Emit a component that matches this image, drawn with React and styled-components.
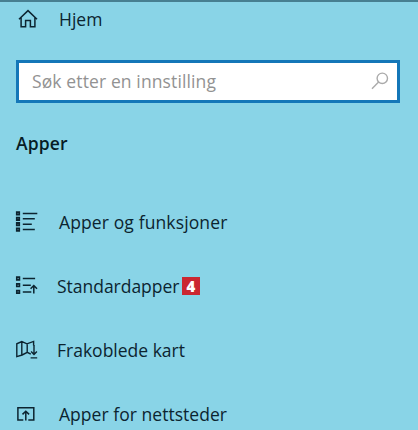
import React from "react";

//styles
import styled, { createGlobalStyle } from "styled-components";

const HomeIcon = () => (
    <svg width="20" height="20" viewBox="0 0 20 20" fill="none" stroke="currentColor" strokeWidth="1.5">
        <path d="M1 10.3L10 1.6l9 8.7M3.1 8.6v9.2h4.5v-6.2h4.8v6.2h4.5V8.6" />
    </svg>
);

const SearchIcon = () => (
    <svg width="18" height="18" viewBox="0 0 18 18" fill="none" stroke="currentColor" strokeWidth="1.4">
        <circle cx="11.3" cy="6.3" r="5.2" />
        <path d="M7.6 10L1 16.8" />
    </svg>
);

const AppsIcon = () => (
    <svg width="24" height="22" viewBox="0 0 24 22" fill="none" stroke="currentColor">
        <path
            strokeWidth="1.8"
            d="M1.8 1.2h2.4v2.4H1.8zM1.8 6.6h2.4v2.4H1.8zM1.8 12h2.4v2.4H1.8zM1.8 17.4h2.4v2.4H1.8z"
        />
        <path strokeWidth="1.5" d="M7.8 2.5h14.5M7.8 7.8h12M7.8 13.2h9M7.8 18.6h12" />
    </svg>
);

const DefaultAppsIcon = () => (
    <svg width="24" height="20" viewBox="0 0 24 20" fill="none" stroke="currentColor">
        <path strokeWidth="1.7" d="M1.8 1.2h2.6v2.6H1.8zM1.8 7.9h2.6v2.6H1.8zM1.8 14.6h2.6v2.6H1.8z" />
        <path strokeWidth="1.5" d="M7.8 2.6h12.3M7.8 9.3h8M7.8 16h8.5M18.8 17.6v-8M15.6 12.8l3.2-3.3 3.2 3.3" />
    </svg>
);

const MapIcon = () => (
    <svg width="24" height="20" viewBox="0 0 24 20" fill="none" stroke="currentColor" strokeWidth="1.4">
        <path d="M15.8 14.2l-3.5-1.8-5.2 2.6-5.3 1.6V3.8l5-2.2L12 3.8l6.6-2.4v4M6.8 1.6V15M12.2 3.8v8.6" />
        <path d="M19 5v9.4M16.1 11.6l2.9 2.9 2.9-2.9M15.6 17.9h6.6" />
    </svg>
);

const WebsitesIcon = () => (
    <svg width="21" height="16" viewBox="0 0 21 16" fill="none" stroke="currentColor" strokeWidth="1.5">
        <path d="M8.3 14H2.9V1.7h15.9V14h-5.5M10.8 14.6V5.4M7.5 8.4l3.3-3.2 3.3 3.2" />
    </svg>
);

const items = [
    { name: "Apper og funksjoner", icon: <AppsIcon />, indent: 59, spacing: 0.12 },
    { name: "Standardapper", icon: <DefaultAppsIcon />, indent: 57, spacing: -0.02, badge: 4 },
    { name: "Frakoblede kart", icon: <MapIcon />, indent: 57, spacing: 0 },
    { name: "Apper for nettsteder", icon: <WebsitesIcon />, indent: 59, spacing: 0.04 },
];

const App = () => {
    return (
        <>
            <GlobalStyle />
            <SettingsPanel>
                <HomeLink>
                    <HomeLinkIcon>
                        <HomeIcon />
                    </HomeLinkIcon>
                    <ItemName>Hjem</ItemName>
                </HomeLink>
                <SearchBox>
                    <SearchPlaceholder>Søk etter en innstilling</SearchPlaceholder>
                    <SearchIcon />
                </SearchBox>
                <SectionHeader>Apper</SectionHeader>
                <ItemList>
                    {items.map((item) => (
                        <Item key={item.name}>
                            <ItemIcon $width={item.indent - 15}>{item.icon}</ItemIcon>
                            <ItemName $spacing={item.spacing}>{item.name}</ItemName>
                            {item.badge && <Badge>{item.badge}</Badge>}
                        </Item>
                    ))}
                </ItemList>
            </SettingsPanel>
        </>
    );
};

export default App;

const GlobalStyle = createGlobalStyle`
    * {
        box-sizing: border-box;
    }

    body {
        margin: 0;

        overflow: hidden;

        font-family: "Open Sans", "Noto Sans", sans-serif;
    }
`;

const SettingsPanel = styled.div`
    height: 430px;

    overflow: hidden;

    background-color: #89d4e7;

    border-top: 2px solid #477f91;

    color: #0c2430;
`;

const HomeLink = styled.div`
    display: flex;

    height: 34px;

    align-items: center;

    padding-left: 18px;
`;

const HomeLinkIcon = styled.div`
    display: flex;

    width: 41px;
`;

const ItemName = styled.div`
    font-size: 17.5px;

    line-height: 24px;

    white-space: nowrap;

    letter-spacing: ${(props) => props.$spacing || 0}px;
`;

const SearchBox = styled.div`
    display: flex;

    width: 384px;

    height: 43px;

    margin: 24px 0 0 16px;

    padding: 0 8px 2px 13px;

    align-items: center;

    justify-content: space-between;

    background-color: #fff;

    border: 3px solid #1477b8;

    color: #aaa;
`;

const SearchPlaceholder = styled.div`
    font-size: 17.5px;

    line-height: 24px;

    letter-spacing: 0.12px;

    color: #929292;
`;

const SectionHeader = styled.div`
    margin: 28px 0 0 16px;

    font-size: 17.5px;

    font-weight: 600;

    line-height: 24px;

    letter-spacing: 0.15px;

    color: #071c25;
`;

const ItemList = styled.div`
    margin-top: 35px;
`;

const Item = styled.div`
    display: flex;

    height: 64px;

    padding-left: 15px;

    align-items: center;
`;

const ItemIcon = styled.div`
    display: flex;

    width: ${(props) => props.$width}px;

    flex-shrink: 0;
`;

const Badge = styled.div`
    width: 18px;

    height: 18px;

    margin-left: 2.5px;

    background-color: #cb2731;

    color: #fff;

    font-size: 15px;

    font-weight: 800;

    line-height: 18px;

    text-align: center;
`;
